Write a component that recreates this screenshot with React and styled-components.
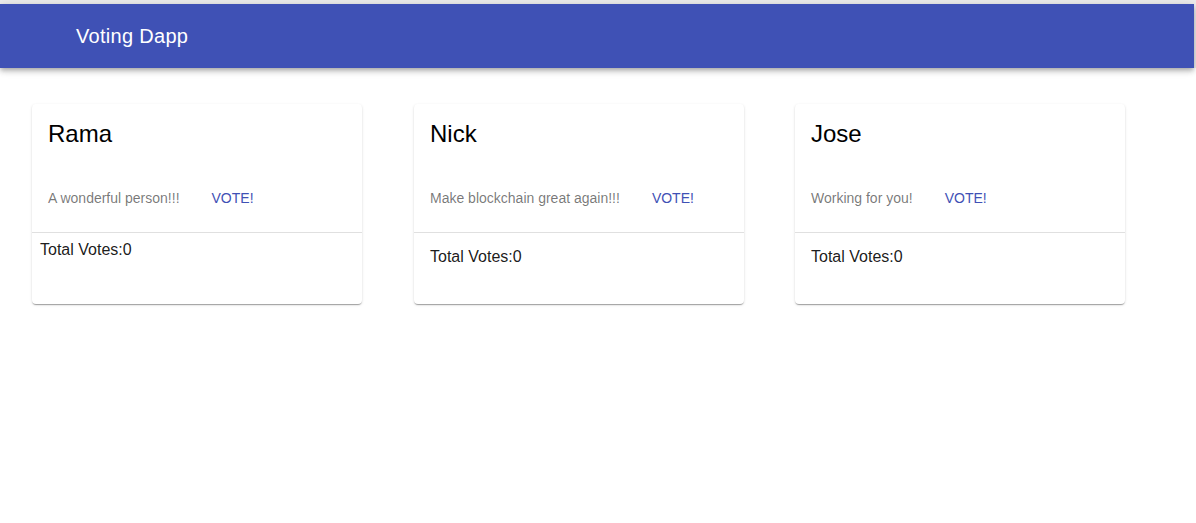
import React from "react";
import styled, { createGlobalStyle } from "styled-components";

const GlobalStyle = createGlobalStyle`
  html, body {
    margin: 0;
    padding: 0;
    background: #ffffff;
    font-family: "Liberation Sans", Arial, Helvetica, sans-serif;
  }
  * { box-sizing: border-box; }
`;

const HeaderFrame = styled.header`
  background: #ececec;
  padding: 4px 2px 0 0;
  height: 68px;
`;

const AppBar = styled.div`
  height: 64px;
  background: #3f51b5;
  color: #ffffff;
  display: flex;
  align-items: center;
  padding: 0 76px;
  box-shadow: 0px 2px 4px -1px rgba(0, 0, 0, 0.2),
    0px 4px 5px 0px rgba(0, 0, 0, 0.14), 0px 1px 10px 0px rgba(0, 0, 0, 0.12);
  position: relative;
  z-index: 1;
`;

const Title = styled.h1`
  margin: 0;
  font-size: 20px;
  font-weight: 500;
  line-height: 32px;
  letter-spacing: 0.3px;
`;

const Main = styled.main`
  display: grid;
  grid-template-columns: 382px 381px 381px;
  padding: 28px 0 0 24px;
`;

const Cell = styled.div`
  padding: 8px;
`;

const Card = styled.div`
  width: 330px;
  height: 200px;
  background: #ffffff;
  border-radius: 4px;
  display: flex;
  flex-direction: column;
  overflow: hidden;
  box-shadow: 0px 2px 1px -1px rgba(0, 0, 0, 0.2),
    0px 1px 1px 0px rgba(0, 0, 0, 0.14), 0px 1px 3px 0px rgba(0, 0, 0, 0.12);
`;

const CardTop = styled.div`
  padding: 16px;
  border-bottom: 1px solid #e0e0e0;
`;

const Name = styled.h2`
  margin: 0;
  font-size: 24px;
  font-weight: 400;
  line-height: 28px;
  color: #000000;
`;

const ActionRow = styled.div`
  margin-top: 32px;
  height: 36px;
  display: flex;
  align-items: center;
`;

const Description = styled.span`
  font-size: 14px;
  line-height: normal;
  color: rgba(0, 0, 0, 0.54);
`;

const VoteButton = styled.button`
  margin-left: 24px;
  padding: 6px 8px;
  border: none;
  background: transparent;
  font-family: inherit;
  font-size: 14px;
  font-weight: 500;
  line-height: 24px;
  letter-spacing: 0;
  text-transform: uppercase;
  color: #3f51b5;
  cursor: pointer;
  border-radius: 4px;
`;

const CardFooter = styled.div`
  flex: 1;
  padding: ${(p) => (p.$compact ? "8px" : "15px 16px")};
  font-size: 16px;
  line-height: normal;
  color: rgba(0, 0, 0, 0.9);
`;

const candidates = [
  { name: "Rama", description: "A wonderful person!!!", votes: 0, compact: true },
  { name: "Nick", description: "Make blockchain great again!!!", votes: 0 },
  { name: "Jose", description: "Working for you!", votes: 0 },
];

export default function App() {
  return (
    <>
      <GlobalStyle />
      <HeaderFrame>
        <AppBar>
          <Title>Voting Dapp</Title>
        </AppBar>
      </HeaderFrame>
      <Main>
        {candidates.map((c) => (
          <Cell key={c.name}>
            <Card>
              <CardTop>
                <Name>{c.name}</Name>
                <ActionRow>
                  <Description>{c.description}</Description>
                  <VoteButton>Vote!</VoteButton>
                </ActionRow>
              </CardTop>
              <CardFooter $compact={c.compact}>Total Votes:{c.votes}</CardFooter>
            </Card>
          </Cell>
        ))}
      </Main>
    </>
  );
}
